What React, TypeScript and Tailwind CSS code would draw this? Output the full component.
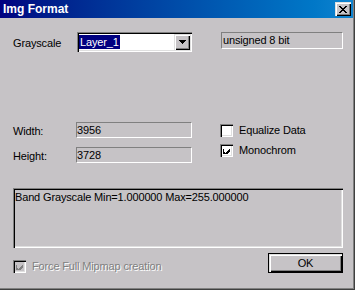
import React from 'react'

const sunken2 =
  'shadow-[inset_1px_1px_0_#808080,inset_2px_2px_0_#000000,inset_-1px_-1px_0_#ffffff,inset_-2px_-2px_0_#dfdfdf]'
const raised2 =
  'shadow-[inset_1px_1px_0_#dfdfdf,inset_2px_2px_0_#ffffff,inset_-1px_-1px_0_#000000,inset_-2px_-2px_0_#808080]'
const flat1 = 'border border-t-[#808080] border-l-[#808080] border-b-white border-r-white'

function Check({ checked, disabled }: { checked?: boolean; disabled?: boolean }) {
  return (
    <div
      className={`w-[13px] h-[13px] shrink-0 flex items-center justify-center ${sunken2} ${
        disabled ? 'bg-[#c6c3c6]' : 'bg-white'
      }`}
    >
      {checked && (
        <svg width="7" height="7" viewBox="0 0 7 7" shapeRendering="crispEdges">
          <path
            d="M0 2h1v3h1v1h1v-1h1v-1h1v-1h1v-1h1v3h-1v1h-1v1h-1v1h-1v1h-1v-1h-1v-1h-1z"
            fill={disabled ? '#808080' : '#000'}
          />
        </svg>
      )}
    </div>
  )
}

function App() {
  return (
    <div
      className="w-[355px] h-[290px] bg-[#c6c3c6] text-black text-[11px] leading-[13px] tracking-[-0.15px] shadow-[inset_-1px_-1px_0_#404040,inset_-2px_-2px_0_#808080] overflow-hidden"
      style={{ fontFamily: '"Liberation Sans", Arial, sans-serif' }}
    >
      <div className="h-[18px] mr-[2px] bg-gradient-to-r from-[#000080] to-[#1084d0] flex items-center justify-between pl-[3px] pr-[2px]">
        <span className="text-white font-bold text-[12px] tracking-normal">Img Format</span>
        <div className={`w-[16px] h-[14px] bg-[#c6c3c6] flex items-center justify-center ${raised2}`}>
          <svg width="8" height="7" viewBox="0 0 8 7" shapeRendering="crispEdges">
            <path
              d="M0 0h2v1h1v1h2v-1h1v-1h2v1h-1v1h-1v1h-1v1h1v1h1v1h1v1h-2v-1h-1v-1h-2v1h-1v1h-2v-1h1v-1h1v-1h1v-1h-1v-1h-1v-1h-1z"
              fill="#000"
            />
          </svg>
        </div>
      </div>

      <div className="pl-[13px] pr-[12px]">
        <div className="flex items-start mt-[14px]">
          <span className="w-[64px] mt-[5px]">Grayscale</span>
          <div className={`w-[115px] h-[20px] bg-white flex items-center pl-[2px] pr-[2px] ${sunken2}`}>
            <span className="bg-[#000080] text-white px-[1px] leading-[14px]">Layer_1</span>
            <div className="flex-1" />
            <div className={`w-[16px] h-[16px] bg-[#c6c3c6] flex items-center justify-center ${raised2}`}>
              <svg width="7" height="4" viewBox="0 0 7 4" shapeRendering="crispEdges">
                <path d="M0 0h7v1h-1v1h-1v1h-1v1h-1v-1h-1v-1h-1v-1h-1z" fill="#000" />
              </svg>
            </div>
          </div>
          <div className={`ml-[29px] w-[122px] h-[17px] ${flat1} flex items-center pl-[1px]`}>
            unsigned 8 bit
          </div>
        </div>

        <div className="flex mt-[70px]">
          <div className="flex flex-col gap-[9px] w-[207px]">
            <div className="flex items-center">
              <span className="w-[63px] mt-[3px]">Width:</span>
              <div className={`w-[116px] h-[16px] ${flat1} flex items-center`}>3956</div>
            </div>
            <div className="flex items-center">
              <span className="w-[63px] mt-[3px]">Height:</span>
              <div className={`w-[116px] h-[16px] ${flat1} flex items-center`}>3728</div>
            </div>
          </div>
          <div className="flex flex-col gap-[7px] mt-[2px]">
            <div className="flex items-center gap-[6px]">
              <Check />
              <span>Equalize Data</span>
            </div>
            <div className="flex items-center gap-[6px]">
              <Check checked />
              <span>Monochrom</span>
            </div>
          </div>
        </div>

        <div className={`mt-[25px] h-[60px] pl-[2px] pt-[3px] ${sunken2}`}>
          Band Grayscale Min=1.000000 Max=255.000000
        </div>

        <div className="flex items-start justify-between mt-[5px]">
          <div className="flex items-center gap-[6px] mt-[7px] text-[#808080] [text-shadow:1px_1px_0_#ffffff]">
            <Check checked disabled />
            <span>Force Full Mipmap creation</span>
          </div>
          <div className="w-[75px] h-[20px] border border-black bg-[#c6c3c6]">
            <div className={`w-full h-full flex items-center justify-center ${raised2}`}>OK</div>
          </div>
        </div>
      </div>
    </div>
  )
}

export default App
